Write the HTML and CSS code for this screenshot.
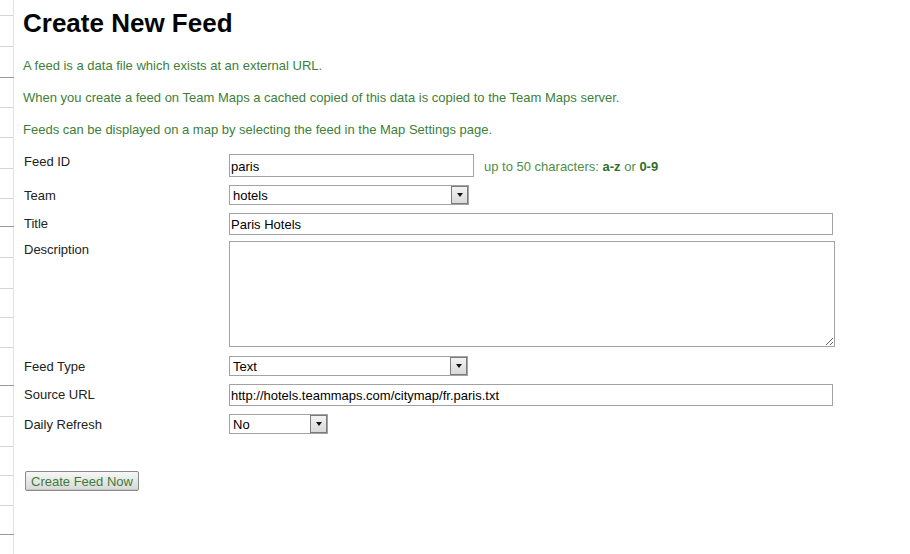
FILE: index.html
```html
<!DOCTYPE html>
<html>
<head>
    <title>Create New Feed</title>
    <link rel="stylesheet" href="styles.css">
</head>
<body>
    <svg class="ruler" width="16" height="554" viewBox="0 0 16 554">
        <line x1="13.5" y1="0" x2="13.5" y2="554" class="ruler-line"/>
        <g class="tick">
            <line x1="0" y1="15.5" x2="13" y2="15.5"/>
            <line x1="0" y1="46.5" x2="13" y2="46.5"/>
            <line x1="0" y1="107.5" x2="13" y2="107.5"/>
            <line x1="0" y1="137.5" x2="13" y2="137.5"/>
            <line x1="0" y1="168.5" x2="13" y2="168.5"/>
            <line x1="0" y1="198.5" x2="13" y2="198.5"/>
            <line x1="0" y1="257.5" x2="13" y2="257.5"/>
            <line x1="0" y1="288.5" x2="13" y2="288.5"/>
            <line x1="0" y1="317.5" x2="13" y2="317.5"/>
            <line x1="0" y1="347.5" x2="13" y2="347.5"/>
            <line x1="0" y1="416.5" x2="13" y2="416.5"/>
            <line x1="0" y1="446.5" x2="13" y2="446.5"/>
            <line x1="0" y1="475.5" x2="13" y2="475.5"/>
            <line x1="0" y1="505.5" x2="13" y2="505.5"/>
        </g>
        <g class="tick tick-major">
            <line x1="0" y1="77.5" x2="14" y2="77.5"/>
            <line x1="0" y1="226.5" x2="14" y2="226.5"/>
            <line x1="0" y1="385.5" x2="14" y2="385.5"/>
            <line x1="0" y1="534.5" x2="14" y2="534.5"/>
        </g>
    </svg>

    <div class="page">
        <h1>Create New Feed</h1>

        <p class="info">A feed is a data file which exists at an external URL.</p>
        <p class="info">When you create a feed on Team Maps a cached copied of this data is copied to the Team Maps server.</p>
        <p class="info">Feeds can be displayed on a map by selecting the feed in the Map Settings page.</p>

        <form id="feedForm" class="feed-form" method="POST">
            <div class="form-row row-id">
                <label class="field-label" for="feedId">Feed ID</label>
                <input type="text" id="feedId" name="feed_id" class="text-input input-short" value="paris">
                <span class="hint">up to 50 characters: <b>a-z</b> or <b>0-9</b></span>
            </div>

            <div class="form-row">
                <label class="field-label" for="team">Team</label>
                <span class="select-wrap select-wide">
                    <select id="team" name="team">
                        <option>hotels</option>
                    </select>
                </span>
            </div>

            <div class="form-row row-title">
                <label class="field-label" for="title">Title</label>
                <input type="text" id="title" name="title" class="text-input input-long" value="Paris Hotels">
            </div>

            <div class="form-row row-desc">
                <label class="field-label" for="description">Description</label>
                <textarea id="description" name="description" class="text-area"></textarea>
            </div>

            <div class="form-row">
                <label class="field-label" for="feedType">Feed Type</label>
                <span class="select-wrap select-type">
                    <select id="feedType" name="feed_type">
                        <option>Text</option>
                    </select>
                </span>
            </div>

            <div class="form-row">
                <label class="field-label" for="sourceUrl">Source URL</label>
                <input type="text" id="sourceUrl" name="source_url" class="text-input input-long" value="http://hotels.teammaps.com/citymap/fr.paris.txt">
            </div>

            <div class="form-row">
                <label class="field-label" for="refresh">Daily Refresh</label>
                <span class="select-wrap select-small">
                    <select id="refresh" name="refresh">
                        <option>No</option>
                        <option>Yes</option>
                    </select>
                </span>
            </div>

            <div class="controls">
                <button type="submit" class="submit-btn">Create Feed Now</button>
            </div>
        </form>
    </div>
</body>
</html>
```

FILE: styles.css
```css
body {
    margin: 0;
    font-family: Arial, "Liberation Sans", sans-serif;
    font-size: 13px;
    background-color: #fff;
    color: #222;
}

.ruler {
    position: absolute;
    left: 0;
    top: 0;
}

.ruler-line {
    stroke: #e2e2e2;
    stroke-width: 1;
}

.tick line {
    stroke: #d4d4d4;
    stroke-width: 1;
}

.tick-major line {
    stroke: #9a9a9a;
}

.page {
    padding: 8px 0 0 23px;
}

h1 {
    margin: 0 0 20px;
    font-size: 26px;
    line-height: 30px;
    font-weight: bold;
    color: #050505;
}

.info {
    margin: 0 0 16px;
    line-height: 16px;
    color: #3d7f38;
}

.feed-form {
    margin: 0;
}

.form-row {
    display: flex;
    align-items: flex-start;
    margin-bottom: 8px;
}

.row-title {
    margin-bottom: 6px;
}

.row-desc {
    margin-bottom: 9px;
}

.field-label {
    width: 205px;
    padding: 3px 0 0 1px;
    line-height: 16px;
    color: #222;
}

.row-id .field-label {
    padding-top: 0;
}

.row-desc .field-label {
    padding-top: 1px;
}

.text-input {
    box-sizing: border-box;
    height: 22px;
    margin: 0;
    padding: 0 1px;
    border: 1px solid #a2a2a2;
    font-family: Arial, "Liberation Sans", sans-serif;
    font-size: 13px;
    color: #000;
    background: #fff;
}

.row-id .text-input {
    height: 23px;
    padding-top: 2px;
}

.input-short {
    width: 245px;
}

.input-long {
    width: 604px;
}

.text-area {
    box-sizing: border-box;
    width: 606px;
    height: 106px;
    margin: 0;
    padding: 1px;
    border: 1px solid #a2a2a2;
    font-family: Arial, "Liberation Sans", sans-serif;
    font-size: 13px;
}

.hint {
    margin: 5px 0 0 10px;
    line-height: 16px;
    color: #4f8e47;
}

.hint b {
    color: #2f6d2c;
}

.select-wrap {
    position: relative;
    display: inline-block;
    height: 20px;
}

.select-wrap select {
    box-sizing: border-box;
    width: 100%;
    height: 20px;
    margin: 0;
    padding: 0 0 0 3px;
    border: 1px solid #a2a2a2;
    border-radius: 0;
    background: #fff;
    font-family: Arial, "Liberation Sans", sans-serif;
    font-size: 13px;
    color: #000;
    appearance: none;
    -webkit-appearance: none;
}

/* drop-down button drawn over the right end of the select */
.select-wrap::before {
    content: "";
    position: absolute;
    top: 1px;
    right: 1px;
    width: 15px;
    height: 16px;
    border: 1px solid #7c7c7c;
    background: linear-gradient(#f2f2f2, #d9d9d9);
    pointer-events: none;
}

.select-wrap::after {
    content: "";
    position: absolute;
    top: 8px;
    right: 6px;
    border-left: 3.5px solid transparent;
    border-right: 3.5px solid transparent;
    border-top: 4px solid #111;
    pointer-events: none;
}

.select-wide {
    width: 240px;
}

.select-type {
    width: 239px;
}

.select-small {
    width: 99px;
}

.controls {
    margin-top: 37px;
    padding-left: 2px;
}

.submit-btn {
    box-sizing: border-box;
    width: 114px;
    height: 20px;
    padding: 0;
    border: 1px solid #8a8a8a;
    border-radius: 2px;
    background: linear-gradient(#f6f7f6, #d6d9d6);
    box-shadow: inset 0 -1px 0 #c4c6c4;
    font-family: Arial, "Liberation Sans", sans-serif;
    font-size: 13px;
    color: #3f7a3a;
    cursor: pointer;
}

.submit-btn:hover {
    background: linear-gradient(#ffffff, #e0e3e0);
}
```
